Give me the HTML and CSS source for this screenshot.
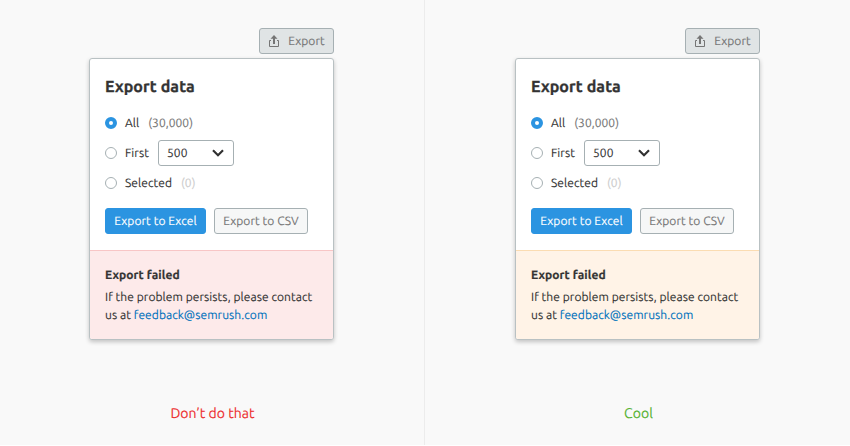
FILE: index.html
```html
<!DOCTYPE html>
<html lang="en">
<head>
<meta charset="utf-8">
<title>Export data</title>
<link rel="stylesheet" href="styles.css">
</head>
<body>
<main class="examples">
  <section class="example">
    <div class="demo">
      <button class="button trigger"><svg class="upload" viewBox="0 0 12 12"><path d="M3 5.5H1.5v6h9v-6H9" fill="none" stroke="currentColor"/><path d="M6 0l3.5 3.8H7V9H5V3.8H2.5z" fill="currentColor"/></svg><span class="label">Export</span></button>
      <div class="card">
        <div class="form">
          <h2>Export data</h2>
          <label class="row"><i class="radio checked"></i><span class="label">All</span><span class="label count">(30,000)</span></label>
          <div class="row"><i class="radio"></i><span class="label">First</span><span class="select"><span class="label">500</span><svg class="chevron" viewBox="0 0 12 8"><path d="M1 1.3l5 5 5-5" fill="none" stroke="currentColor" stroke-width="2.2"/></svg></span></div>
          <label class="row"><i class="radio"></i><span class="label">Selected</span><span class="label count muted">(0)</span></label>
          <div class="actions"><button class="button primary"><span class="label">Export to Excel</span></button><button class="button secondary"><span class="label">Export to CSV</span></button></div>
        </div>
        <div class="notice danger">
          <h3>Export failed</h3>
          <p>If the problem persists, please contact<br>us at <a>feedback@semrush.com</a></p>
        </div>
      </div>
    </div>
    <p class="caption bad">Don’t do that</p>
  </section>
  <section class="example">
    <div class="demo">
      <button class="button trigger"><svg class="upload" viewBox="0 0 12 12"><path d="M3 5.5H1.5v6h9v-6H9" fill="none" stroke="currentColor"/><path d="M6 0l3.5 3.8H7V9H5V3.8H2.5z" fill="currentColor"/></svg><span class="label">Export</span></button>
      <div class="card">
        <div class="form">
          <h2>Export data</h2>
          <label class="row"><i class="radio checked"></i><span class="label">All</span><span class="label count">(30,000)</span></label>
          <div class="row"><i class="radio"></i><span class="label">First</span><span class="select"><span class="label">500</span><svg class="chevron" viewBox="0 0 12 8"><path d="M1 1.3l5 5 5-5" fill="none" stroke="currentColor" stroke-width="2.2"/></svg></span></div>
          <label class="row"><i class="radio"></i><span class="label">Selected</span><span class="label count muted">(0)</span></label>
          <div class="actions"><button class="button primary"><span class="label">Export to Excel</span></button><button class="button secondary"><span class="label">Export to CSV</span></button></div>
        </div>
        <div class="notice warning">
          <h3>Export failed</h3>
          <p>If the problem persists, please contact<br>us at <a>feedback@semrush.com</a></p>
        </div>
      </div>
    </div>
    <p class="caption good">Cool</p>
  </section>
</main>
</body>
</html>
```
FILE: styles.css
```css
* { box-sizing: border-box; }
body { margin: 0; background: #fff; color: #333; font: 12px/18px Ubuntu, "Noto Sans", sans-serif; text-rendering: geometricPrecision; -webkit-text-stroke: .12px; }
h2, h3, p { margin: 0; }
.examples { display: grid; grid-template-columns: 425px 425px; height: 445px; background: #f9f9f9; }
.example { padding-top: 28px; }
.example:first-child { border-right: 1px solid #ececec; }
.demo { display: flex; flex-direction: column; align-items: flex-end; gap: 4px; width: 245px; margin-left: 89px; }
.example + .example .demo { margin-left: 90px; }
.label { padding-top: 2px; letter-spacing: .05px; }
.button { display: flex; align-items: center; justify-content: center; height: 26px; padding: 0; border: 1px solid #a6b0b3; border-radius: 3px; font: inherit; text-rendering: inherit; color: #757575; white-space: nowrap; }
.trigger { width: 75px; gap: 8px; background: #e0e4e5; }
.upload { width: 12px; height: 12px; }
.card { width: 245px; height: 282px; background: #fff; border: 1px solid #b9c1c3; border-radius: 3px; box-shadow: 0 2px 4px rgba(0, 0, 0, .22); overflow: hidden; }
.form { height: 191px; padding: 15px 15px 0; }
h2 { height: 34px; font-size: 16px; line-height: 27px; letter-spacing: .1px; -webkit-text-stroke: .3px; white-space: nowrap; }
.row { display: flex; align-items: center; height: 30px; white-space: nowrap; }
.radio { width: 12px; height: 12px; margin-right: 8px; border: 1px solid #a6b0b3; border-radius: 50%; background: #fff; }
.checked { border: 4px solid #2b94e1; }
.count { margin-left: 9px; color: #757575; }
.muted { color: #ccc; }
.select { display: flex; align-items: center; justify-content: space-between; width: 76px; height: 26px; margin-left: auto; margin-right: 84px; flex: none; padding: 0 9px 0 8px; border: 1px solid #a6b0b3; border-radius: 3px; }
.chevron { width: 12px; height: 8px; }
.actions { display: flex; gap: 8px; margin-top: 10px; }
.primary { width: 101px; background: #2b94e1; border-color: #2b94e1; color: #fff; }
.secondary { width: 94px; background: #f6f7f7; }
.notice { height: 89px; padding: 16px 15px 0; border-top: 1px solid; }
.danger { background: #fdeaea; border-color: #f8c6c6; }
.warning { background: #fff3e7; border-color: #fbdcb2; }
.notice h3 { height: 22px; font-size: 12px; line-height: 18px; letter-spacing: .08px; -webkit-text-stroke: .2px; }
.notice p { letter-spacing: .06px; white-space: nowrap; }
.notice a { color: #0071bc; }
.caption { margin-top: 63px; font-size: 14px; line-height: 20px; letter-spacing: .04px; text-align: center; }
.bad { padding-left: 1px; color: #ed2e2e; }
.good { padding-left: 2px; color: #54b12f; }
```
